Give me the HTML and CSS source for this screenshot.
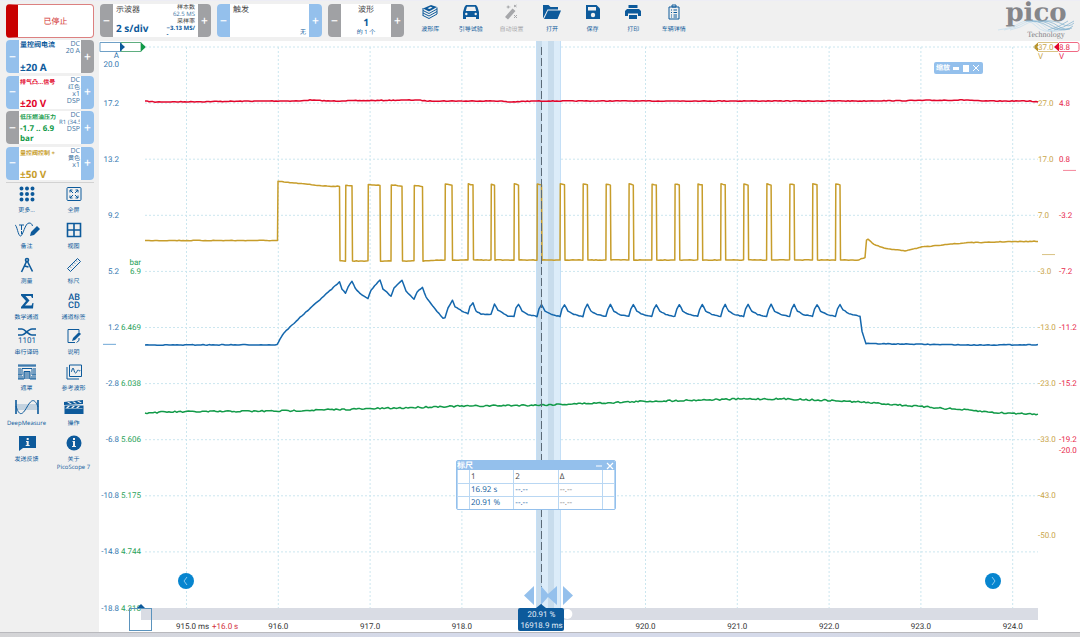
FILE: index.html
```html
<!DOCTYPE html>
<html lang="zh-CN">
<head>
    <meta charset="UTF-8">
    <meta name="viewport" content="width=device-width, initial-scale=1.0">
    <title>PicoScope 7</title>
    <link rel="stylesheet" href="styles.css">
</head>
<body>
    <header class="topbar">
        <button class="stop-btn" type="button">已停止</button>
        <section class="panel scope">
            <button class="step grey" type="button">−</button>
            <div class="panel-body split">
                <div class="main-col">
                    <span class="panel-title">示波器</span>
                    <strong class="value">2 s/div</strong>
                </div>
                <div class="info-col">
                    <span class="dark">样本数</span>
                    <span>62.5 MS</span>
                    <span class="dark">采样率</span>
                    <b>−3.13 MS/</b>
                    <b class="wrapped">-</b>
                </div>
            </div>
            <button class="step grey" type="button">+</button>
        </section>
        <section class="panel trigger">
            <button class="step" type="button">−</button>
            <div class="panel-body">
                <span class="panel-title">触发</span>
                <span class="panel-note">无</span>
            </div>
            <button class="step" type="button">+</button>
        </section>
        <section class="panel waves">
            <button class="step grey" type="button">−</button>
            <div class="panel-body centered">
                <span class="panel-title">波形</span>
                <strong class="value">1</strong>
                <span class="panel-note">的 1 个</span>
            </div>
            <button class="step grey" type="button">+</button>
        </section>
        <nav class="toolbar">
            <button class="tool" type="button">
                <svg viewBox="0 0 16 16"><path d="M1 4.500l8-3.500 6 2-8 4.500z"/><path class="line" d="M1 6.500l6 3 8-4.500M1 9l6 3 8-4.500M1 11.500l6 3 8-4.500M1 4v8M15 3.500v6.500"/><path class="hole" d="M5.500 4.200l3-1.400 2 .7-3 1.500z"/></svg>
                波形库
            </button>
            <button class="tool" type="button">
                <svg viewBox="0 0 16 16"><path d="M3 1h10l1.500 2L16 8v7h-3v-2H3v2H0V8l1.500-5z"/><path class="hole" d="M4 2.800h8L13.200 7H2.800z"/><circle class="hole" cx="3.300" cy="10" r="1.200"/><circle class="hole" cx="12.700" cy="10" r="1.200"/></svg>
                引导试验
            </button>
            <button class="tool off" type="button" disabled>
                <svg viewBox="0 0 16 16"><path d="M2 13l7.500-8.500 3 2.500L5 15.500zM5 1l1 1.500L8 3 6 3.500 5 5l-.5-1.500L3 3l1.500-.5z"/><path class="line" d="M11 3l2.500-2M11 1l2.500 2M11 11l3 3M14 11l-3 3"/></svg>
                自动设置
            </button>
            <button class="tool" type="button">
                <svg class="folder" viewBox="0 0 18 16"><path d="M0 14.500V1h5.500l2 2H15v2.500H4.500z"/><path d="M5 6.500h13L14.500 15H1z"/></svg>
                打开
            </button>
            <button class="tool" type="button">
                <svg viewBox="0 0 16 16"><path d="M1 1h10.500L15 4.500V15H1z"/><path class="hole" d="M3 3h8v3.500H3z"/><circle class="hole" cx="8" cy="11" r="2.200"/></svg>
                保存
            </button>
            <button class="tool" type="button">
                <svg viewBox="0 0 16 16"><path d="M3.500 1h9v3h-9zM2 5h12l2 2v5h-3V9.500H3V12H0V7z"/><path d="M4 11h8v4H4z"/></svg>
                打印
            </button>
            <button class="tool" type="button">
                <svg viewBox="0 0 16 16"><path class="line" d="M3 3h10v12H3zM6 3V1h4v2zM5 6h1M7.500 6H11M5 8.500h1M7.500 8.500H11M5 11h1M7.500 11H11M5 13h1M7.500 13H11"/></svg>
                车辆详情
            </button>
        </nav>
        <div class="logo">
            <span class="logo-name">pico</span>
            <svg class="logo-wave" viewBox="0 0 76 11">
                <path d="M0 10Q14 8 22 3T38 6 56 10M6 10Q18 8 26 3T42 6 60 10M12 10Q22 8 30 3T46 6 64 10" stroke="#c3dcec"/>
                <path d="M28 1Q40 0 50 6T72 9M34 1Q46 0 55 6T74 8M40 1Q52 0 60 6T75 6M46 1Q57 0 64 4T76 3M56 10Q66 8 76 1M50 10Q60 8 70 1" stroke="#7fb0cf"/>
            </svg>
            <span class="logo-sub">Technology</span>
        </div>
    </header>

    <div class="workspace">
        <aside class="sidebar">
            <div class="channels">
                <article class="channel blue">
                    <button class="step" type="button">−</button>
                    <div class="channel-body">
                        <div class="main-col"><span class="name large">量控阀电流</span><strong>±20 A</strong></div>
                        <div class="info-col"><span>DC</span><span>20 A</span></div>
                    </div>
                    <button class="step grey" type="button">+</button>
                </article>
                <article class="channel red">
                    <button class="step" type="button">−</button>
                    <div class="channel-body">
                        <div class="main-col"><span class="name">排气凸...信号</span><strong>±20 V</strong></div>
                        <div class="info-col"><span>DC</span><span class="cjk">红色</span><span>x1</span><span>DSP</span></div>
                    </div>
                    <button class="step" type="button">+</button>
                </article>
                <article class="channel green">
                    <button class="step grey" type="button">−</button>
                    <div class="channel-body">
                        <div class="main-col"><span class="name">低压燃油压力</span><strong class="range">-1.7 .. 6.9<br>bar</strong></div>
                        <div class="info-col"><span>DC</span><span class="cut">R1 (34.5</span><span>DSP</span></div>
                    </div>
                    <button class="step" type="button">+</button>
                </article>
                <article class="channel gold">
                    <button class="step" type="button">−</button>
                    <div class="channel-body">
                        <div class="main-col"><span class="name">量控阀控制 +</span><strong>±50 V</strong></div>
                        <div class="info-col"><span>DC</span><span class="cjk">黄色</span><span>x1</span></div>
                    </div>
                    <button class="step" type="button">+</button>
                </article>
            </div>
            <nav class="tools">
                <button class="tool" type="button">
                    <svg viewBox="0 0 16 16"><path class="dots" d="M2.500 2.500h0M8 2.500h0M13.500 2.500h0M2.500 8h0M8 8h0M13.500 8h0M2.500 13.500h0M8 13.500h0M13.500 13.500h0"/></svg>
                    更多...
                </button>
                <button class="tool" type="button">
                    <svg viewBox="0 0 16 16"><rect class="line" x="1" y="1.500" width="14" height="13" rx="1"/><path class="line" d="M4 6.500V4h2.500M9.500 4H12v2.500M12 9.500V12H9.500M6.500 12H4V9.500M4 4l3 3M12 4L9 7M4 12l3-3M12 12L9 9"/></svg>
                    全屏
                </button>
                <button class="tool" type="button">
                    <svg class="wide" viewBox="0 0 26 16"><path class="line" d="M1 3c2 0 3 11 5.500 11S11 1 15 1c2 0 3 1 3.500 3M5 3h5M7.500 3v5M7.500 9v3"/><path d="M16 14l1-4 6-6 3 3-6 6z"/></svg>
                    备注
                </button>
                <button class="tool" type="button">
                    <svg viewBox="0 0 16 16"><path class="line bold" d="M1.500 1.500h13v13h-13zM8 1.500v13M1.500 8h13"/></svg>
                    视图
                </button>
                <button class="tool" type="button">
                    <svg viewBox="0 0 16 16"><path class="line bold" d="M7.500 4.500L2.500 15M8.500 4.500l5 10M5.500 9l4 1"/><circle class="line bold" cx="8" cy="3" r="1.500"/></svg>
                    测量
                </button>
                <button class="tool" type="button">
                    <svg viewBox="0 0 16 16"><path class="line" d="M1.500 11.500l10-10 3 3-10 10zM4 9.500l1 1M6 7.500l1 1M8 5.500l1 1M10 3.500l1 1"/></svg>
                    标尺
                </button>
                <button class="tool" type="button">
                    <svg viewBox="0 0 16 16"><path d="M2 1h12v4h-1l-1-2H6.500l4 4.500L6 12.500h6.500l1-2.500h1L14 15.500H2V14l5-6-5-5.500z"/></svg>
                    数学通道
                </button>
                <button class="tool" type="button">
                    <svg viewBox="0 0 16 16"><text x="8" y="7" class="icon-text">AB</text><text x="8" y="15" class="icon-text">CD</text></svg>
                    通道标签
                </button>
                <button class="tool" type="button">
                    <svg class="wide" viewBox="0 0 26 16"><path class="line bold" d="M4 1h4c3 0 6 6 10 6h4M4 7h4c3 0 6-6 10-6h4"/><text x="13" y="15" class="icon-text plain">1101</text></svg>
                    串行译码
                </button>
                <button class="tool" type="button">
                    <svg viewBox="0 0 16 16"><path class="line" d="M13 4V1.500H2v13h7M13 10v2.500l-2.500 2"/><path d="M6 13l1-3 6-6 2 2-6 6z"/></svg>
                    说明
                </button>
                <button class="tool" type="button">
                    <svg class="wide" viewBox="0 0 26 16"><path d="M4 1h18v2H4zM4 4h3v7H4zM19 4h3v7h-3zM10 8h6v7h-6zM4 12h5v3H4zM17 12h5v3h-5z" opacity=".55"/><path class="line" d="M4 1h18M4 11h4V4.500h10V11h4M4 15h6V7.500h6V15h6"/></svg>
                    遮罩
                </button>
                <button class="tool" type="button">
                    <svg viewBox="0 0 16 16"><path class="line" d="M3.500 1h12v11.500h-12zM1 3v12h12M5 8c1 0 1-4 2-4s1 5 2.500 5S11 6 12 6s1 2 2.500 0"/></svg>
                    参考波形
                </button>
                <button class="tool" type="button">
                    <svg class="wide" viewBox="0 0 26 16"><path d="M2 5h22v6H2z" opacity=".2"/><path class="line bold" d="M2 1v14M24 1v14"/><path class="line" d="M2 7c3 10 6 10 11 1s8-8 11 0"/></svg>
                    DeepMeasure
                </button>
                <button class="tool" type="button">
                    <svg class="wide" viewBox="0 0 26 16"><path d="M3.500 6.500h19V15h-19zM3 3l19-2v4L3 6z"/><path class="hole" d="M6 3l3 2h2L8 3zM11 2.500l3 2h2l-3-2zM16 2l3 2h2l-3-2zM7 7L5 9h2l2-2zM12 7l-2 2h2l2-2zM17 7l-2 2h2l2-2zM4.500 9.500h17v.6h-17z"/></svg>
                    操作
                </button>
                <button class="tool" type="button">
                    <svg class="wide" viewBox="0 0 26 16"><path d="M5 1h17v12H9l-4 3z"/><path class="hole" d="M12.700 3h2v2h-2zM12 6h2.700v4h1v1h-4v-1h1V7H12z"/></svg>
                    发送反馈
                </button>
                <button class="tool" type="button">
                    <svg viewBox="0 0 16 16"><circle cx="8" cy="8" r="7.500"/><path class="hole" d="M7 3h2v2H7zM6.500 6H9v5h1v1H6v-1h1V7h-.5z"/></svg>
                    <span>关于<br>PicoScope 7</span>
                </button>
            </nav>
        </aside>

        <main class="graph">
            <svg class="axis" id="left-axis"></svg>
            <div class="plot">
                <svg class="grid" id="grid"></svg>
                <svg class="traces" viewBox="145 47 893 561" preserveAspectRatio="none">
                    <g class="zoom-band">
                        <rect x="537" y="41" width="24" height="567" fill="#dcecf9"/>
                        <rect x="537" y="41" width="5" height="567" fill="#c8dcec"/>
                        <rect x="548" y="41" width="6" height="567" fill="#c8dcec"/>
                        <path d="M536.500 41v567M560.500 41v567" stroke="#c4dff6"/>
                    </g>
                    <g id="traces"></g>
                    <path class="ruler" d="M541.500 47v561"/>
                    <path class="handles" d="M534 586v19l-10-9.500zM541 586l7 8 9-8v19l-9-8-7 8zM563 586v19l10-9.500z"/>
                </svg>
                <div class="ruler-flag"><span>20.91 %</span><span>16918.9 ms</span></div>
                <button class="pan prev" type="button" aria-label="上一页"><svg viewBox="0 0 16 16"><path d="M9 4L6 8l3 4"/></svg></button>
                <button class="pan next" type="button" aria-label="下一页"><svg viewBox="0 0 16 16"><path d="M7 4l3 4-3 4"/></svg></button>
                <div class="zoom-pill">
                    缩放
                    <svg viewBox="0 0 30 9"><path d="M1 3h6v3H1zM11 1h6v7h-6z" fill="#fff"/><path d="M21 1l6 6M27 1l-6 6" stroke="#fff"/></svg>
                </div>
                <section class="rulers">
                    <header>标尺<svg viewBox="0 0 20 8"><path d="M1 4h6M12 1l6 6M18 1l-6 6"/></svg></header>
                    <table>
                        <tr><th></th><th>1</th><th>2</th><th>Δ</th><th></th></tr>
                        <tr><td></td><td>16.92 s</td><td>--.--</td><td class="delta">--.--</td><td></td></tr>
                        <tr><td></td><td>20.91 %</td><td>--.--</td><td class="delta">--.--</td><td></td></tr>
                    </table>
                </section>
            </div>
            <svg class="axis" id="right-axis"></svg>
            <div class="time-axis">
                <svg id="time-axis"></svg>
            </div>
        </main>
    </div>
    <footer class="desktop-edge"></footer>
    <script src="script.js"></script>
</body>
</html>
```
FILE: styles.css
```css
* {
    box-sizing: border-box;
}
body {
    margin: 0;
    min-height: 100vh;
    display: flex;
    flex-direction: column;
    background: #f0f0f0;
    color: #0d5a9b;
    font-family: "Open Sans", "Noto Sans CJK SC", sans-serif;
    font-size: 7px;
    line-height: 8px;
    text-rendering: geometricPrecision;
}
button {
    margin: 0;
    padding: 0;
    border: none;
    background: none;
    color: inherit;
    font: inherit;
    text-rendering: inherit;
}
svg {
    display: block;
    overflow: visible;
}

/* top bar */
.topbar {
    display: flex;
    height: 40px;
    padding: 3px 6px 2px;
    gap: 6px;
    border-top: 1px solid #ededf5;
}
.stop-btn {
    width: 88px;
    height: 34px;
    padding-top: 2px;
    border: 1px solid #dc8080;
    border-left: 12px solid #c80000;
    border-radius: 4px;
    background: #fff;
    color: #d23030;
    font-size: 8px;
}
.panel,
.channel {
    display: flex;
    background: #fff;
    border-radius: 4px;
    overflow: hidden;
    height: 33px;
}
.scope {
    width: 111px;
}
.trigger {
    width: 105px;
}
.waves {
    width: 76px;
}
.step {
    flex: 0 0 13px;
    background: #94c0ec;
    color: #fff;
    font-size: 12px;
    font-weight: 600;
    line-height: 12px;
}
.step.grey {
    background: #a0a1a4;
}
.panel-body {
    flex: 1;
    min-width: 0;
    display: flex;
    flex-direction: column;
    justify-content: space-between;
    padding: 0 3px;
}
.panel-body.split {
    flex-direction: row;
}
.panel-body.centered {
    align-items: center;
}
.panel-title {
    color: #444;
    font-size: 8px;
    line-height: 12px;
}
.value {
    font-size: 10px;
    line-height: 12px;
}
.scope .main-col {
    display: flex;
    flex-direction: column;
    gap: 6px;
    white-space: nowrap;
}
.panel-note {
    align-self: flex-end;
    font-size: 6px;
    line-height: 9px;
}
.centered .panel-note {
    align-self: center;
}
.info-col {
    display: flex;
    flex-direction: column;
    align-items: flex-end;
    font-size: 6px;
    line-height: 7px;
    color: #3a719f;
    white-space: nowrap;
}
.info-col b {
    color: #0d5a9b;
}
.info-col .dark {
    color: #444;
}
.info-col .wrapped {
    align-self: flex-start;
    line-height: 4px;
}
.toolbar {
    display: flex;
    width: 284px;
}
.tool {
    display: flex;
    flex-direction: column;
    align-items: center;
    color: #0d5a9b;
    fill: #0d5a9b;
    font-size: 6px;
    line-height: 8px;
    white-space: nowrap;
}
.toolbar .tool {
    flex: 1;
    gap: 5px;
}
.tool svg {
    width: 16px;
    height: 16px;
}
.tool svg.folder {
    width: 18px;
}
.tool svg.wide {
    width: 26px;
}
.tool.off {
    color: #a6a7aa;
    fill: #a6a7aa;
}
.line {
    fill: none;
    stroke: #0d5a9b;
    stroke-width: 1;
}
.off .line {
    stroke: #a6a7aa;
}
.bold {
    stroke-width: 1.6;
}
.dots {
    stroke: #0d5a9b;
    stroke-width: 4;
    stroke-linecap: round;
}
.hole {
    fill: #f0f0f0;
}
.icon-text {
    font-family: Roboto, sans-serif;
    font-size: 9px;
    font-weight: 500;
    text-anchor: middle;
}
.icon-text.plain {
    font-size: 8px;
    font-weight: normal;
}
.logo {
    width: 76px;
    margin-left: auto;
    display: flex;
    flex-direction: column;
    align-items: center;
    color: #85868a;
}
.logo-name {
    font-family: "DejaVu Serif", serif;
    font-size: 26px;
    font-weight: bold;
    line-height: 18px;
    height: 16px;
}
.logo-wave {
    width: 76px;
    height: 11px;
    fill: none;
    stroke-width: 0.7;
}
.logo-sub {
    padding-left: 20px;
    font-family: "Liberation Serif", serif;
    font-size: 8px;
}

/* sidebar */
.workspace {
    flex: 1;
    display: flex;
}
.sidebar {
    width: 99px;
    padding: 0 5px 0 6px;
    display: flex;
    flex-direction: column;
    gap: 2px;
}
.channels {
    display: flex;
    flex-direction: column;
    justify-content: space-between;
    height: 140px;
}
.channel-body {
    flex: 1;
    min-width: 0;
    display: flex;
    justify-content: space-between;
    position: relative;
    padding: 1px 1px 0;
}
.channel .main-col {
    display: flex;
    flex-direction: column;
    justify-content: space-between;
    white-space: nowrap;
    min-width: 0;
}
.channel strong {
    font-size: 10px;
    line-height: 12px;
}
.channel .range {
    font-size: 8px;
    line-height: 10px;
}
.name {
    font-size: 6px;
    line-height: 10px;
    font-weight: bold;
}
.name.large {
    font-size: 7px;
}
/* the coupling column may lie over a long range */
.channel .info-col {
    position: absolute;
    top: 1px;
    right: 1px;
    font-size: 7px;
}
.channel .info-col .cjk {
    font-size: 6px;
}
.channel .cut {
    width: 21px;
    font-size: 6px;
    overflow: hidden;
}
.blue {
    color: #0d5a9b;
}
.red {
    color: #e2062c;
}
.green {
    color: #119a48;
}
.gold {
    color: #c79d2b;
}
.tools {
    display: grid;
    grid-template-columns: 1fr 1fr;
    grid-auto-rows: 1fr;
    height: 289px;
    column-gap: 6px;
    padding-top: 3px;
    border-top: 1px solid #d2d2d2;
}
.tools .tool {
    gap: 4px;
    justify-content: flex-start;
}

/* graph */
.graph {
    flex: 1;
    display: grid;
    grid-template-columns: 46px 1fr 42px;
    grid-template-rows: 1fr 24px;
    margin-top: 1px;
    padding-top: 6px;
    background: #fff;
    font-family: Roboto, "Noto Sans CJK SC", sans-serif;
    font-size: 8px;
}
.axis {
    width: 100%;
    height: 100%;
}
.axis text,
.time-axis text {
    dominant-baseline: central;
}
.axis .blue {
    fill: #3478b0;
}
.axis .green {
    fill: #2aa25a;
}
.axis .gold {
    fill: #c9a548;
}
.axis .red {
    fill: #e8284c;
}
.plot {
    position: relative;
}
.grid,
.traces {
    position: absolute;
    inset: 0;
    width: 100%;
    height: 100%;
}
.grid line {
    stroke: #cbe6ef;
    stroke-dasharray: 2 2;
}
.trace {
    fill: none;
    stroke-width: 1.5;
    stroke-linejoin: round;
}
.ruler {
    stroke: #5c6b78;
    stroke-dasharray: 8 3;
}
.handles {
    fill: #94c0ec;
}
.ruler-flag {
    position: absolute;
    top: 100%;
    left: 44.4%;
    transform: translateX(-50%);
    z-index: 2;
    width: 46px;
    height: 23px;
    padding-top: 1px;
    border-radius: 2px;
    background: #0d5a9b;
    color: #e3eef8;
    display: flex;
    flex-direction: column;
    align-items: center;
    line-height: 11px;
    white-space: nowrap;
}
.ruler-flag::before {
    content: "";
    position: absolute;
    top: -4px;
    left: 18px;
    border: 5px solid transparent;
    border-top: none;
    border-bottom: 4px solid #0d5a9b;
}
.pan {
    position: absolute;
    bottom: 19px;
    width: 16px;
    height: 16px;
    border-radius: 50%;
    background: #0785cf;
}
.pan path {
    fill: none;
    stroke: #8ccbf0;
    stroke-width: 1;
}
.prev {
    left: 33px;
}
.next {
    right: 37px;
}
.zoom-pill {
    position: absolute;
    top: 15px;
    right: 55px;
    width: 49px;
    height: 12px;
    padding-left: 2px;
    display: flex;
    align-items: center;
    gap: 2px;
    border-radius: 2px;
    background: #94c0ec;
    color: #fff;
    font-size: 7px;
    font-weight: bold;
    white-space: nowrap;
}
.zoom-pill svg {
    width: 30px;
    height: 9px;
}
.rulers {
    position: absolute;
    top: 413px;
    left: 311px;
    width: 160px;
    border: 1px solid #94c0ec;
    border-radius: 2px;
    background: #fff;
    font-family: "Open Sans", "Noto Sans CJK SC", sans-serif;
    overflow: hidden;
}
.rulers header {
    display: flex;
    justify-content: space-between;
    align-items: center;
    height: 9px;
    background: #94c0ec;
    color: #fff;
    font-size: 8px;
    font-weight: bold;
    line-height: 9px;
}
.rulers header svg {
    width: 20px;
    height: 8px;
    stroke: #fff;
    stroke-width: 1.2;
}
.rulers table {
    width: 100%;
    table-layout: fixed;
    border-collapse: collapse;
    line-height: 11px;
}
.rulers th,
.rulers td {
    height: 13px;
    padding: 0 1px;
    border: 1px solid #b9d7f3;
    text-align: left;
    font-weight: normal;
}
.rulers tr:last-child td {
    border-bottom: none;
}
.rulers tr:first-child th {
    border-top: none;
}
.rulers th {
    color: #444;
}
.rulers th:first-child,
.rulers th:last-child {
    width: 12px;
}
.rulers .delta {
    color: #777;
}
.time-axis {
    grid-column: 2;
}
.time-axis svg {
    width: 100%;
    height: 24px;
}
.desktop-edge {
    height: 5px;
    border-top: 1px solid #b9b9bd;
    background: linear-gradient(90deg, #d4d4d6, #d5daea 40%, #d5daea 75%, #d4d4d6);
}
```
FILE: script.js
```javascript
const NS = 'http://www.w3.org/2000/svg';

function add(parent, tag, attrs, text) {
    const el = document.createElementNS(NS, tag);
    for (const key in attrs) el.setAttribute(key, attrs[key]);
    if (text !== undefined) el.textContent = text;
    parent.appendChild(el);
    return el;
}

// one label per grid line, null where the line has none
function labels(axis, values, x, anchor, cls) {
    values.forEach((v, i) => {
        if (v !== null) add(axis, 'text', { x, y: i * 10 + '%', 'text-anchor': anchor, class: cls }, v);
    });
}

const left = document.getElementById('left-axis');
const right = document.getElementById('right-axis');
labels(left, [null, '17.2', '13.2', '9.2', '5.2', '1.2', '-2.8', '-6.8', '-10.8', '-14.8', '-18.8'], 20, 'end', 'blue');
labels(left, [null, null, null, null, '6.9', '6.469', '6.038', '5.606', '5.175', '4.744', '4.318'], 42, 'end', 'green');
labels(right, ['37.0', '27.0', '17.0', '7.0', '-3.0', '-13.0', '-23.0', '-33.0', '-43.0'], 0, 'start', 'gold');
labels(right, ['8.8', '4.8', '0.8', '-3.2', '-7.2', '-11.2', '-15.2', '-19.2'], 21, 'start', 'red');
add(left, 'text', { x: 20, y: 8, 'text-anchor': 'end', class: 'blue' }, 'A');
add(left, 'text', { x: 20, y: 17, 'text-anchor': 'end', class: 'blue' }, '20.0');
add(left, 'text', { x: 42, y: '38.5%', 'text-anchor': 'end', class: 'green' }, 'bar');
add(right, 'text', { x: 0, y: 9, class: 'gold' }, 'V');
add(right, 'text', { x: 21, y: 9, class: 'red' }, 'V');
add(right, 'text', { x: 21, y: '72%', class: 'red' }, '-20.0');
add(right, 'text', { x: 0, y: '87%', class: 'gold' }, '-50.0');

// channel handles and zero marks
add(left, 'path', { d: 'M1 -4.500h21v9H1z', fill: 'none', stroke: '#6fa0c6' });
add(left, 'path', { d: 'M22 -4.500h20v9H22z', fill: 'none', stroke: '#5fae80' });
add(left, 'path', { d: 'M21 -4.500l5 4.500-5 4.500z', fill: '#0d5a9b' });
add(left, 'path', { d: 'M42 -4.500l5 4.500-5 4.500z', fill: '#119a48' });
add(left, 'line', { x1: 4, x2: 17, y1: '53%', y2: '53%', stroke: '#6fa8d6' });
add(right, 'path', { d: 'M0 -4.500h20M0 4.500h20', stroke: '#d9c384' });
add(right, 'path', { d: 'M0 -4.500l-5 4.500 5 4.500z', fill: '#b9932b' });
add(right, 'path', { d: 'M21 -4.500h18q2 0 2 2v5q0 2-2 2H21', fill: 'none', stroke: '#f06a84' });
add(right, 'path', { d: 'M21 -4.500l-5 4.500 5 4.500z', fill: '#e2062c' });
add(right, 'line', { x1: 25, x2: 38, y1: '22%', y2: '22%', stroke: '#f4879c' });
add(right, 'line', { x1: 4, x2: 17, y1: '37%', y2: '37%', stroke: '#d9c384' });

// grid and time scale: 915 s is the first vertical line
const grid = document.getElementById('grid');
const time = document.getElementById('time-axis');
const timeX = t => (41.5 + (t - 915) * 91.8) / 893 * 100 + '%';
for (let i = 0; i < 10; i++) {
    add(grid, 'line', { x1: 0, x2: '100%', y1: i * 10 + '%', y2: i * 10 + '%' });
}
add(time, 'rect', { x: -4, y: 0, width: '100%', height: 12, fill: '#d9dce4' });
add(time, 'rect', { x: '99%', y: 0, width: '1%', height: 12, fill: '#d9dce4' });
for (let t = 915; t <= 924; t++) {
    const x = timeX(t);
    add(grid, 'line', { x1: x, x2: x, y1: 0, y2: '100%' });
    if (t > 915 && t !== 919) {
        add(time, 'text', { x, y: 18, 'text-anchor': 'middle', fill: '#333' }, t + '.0');
    }
}
add(time, 'text', { x: 31, y: 18, fill: '#333' }, '915.0 ms');
add(time, 'text', { x: 67, y: 18, fill: '#d22f3a' }, '+16.0 s');
add(time, 'rect', { x: -15.5, y: 0.5, width: 22, height: 22, fill: 'none', stroke: '#5b93bd' });
add(time, 'path', { d: 'M-8 0l4-4 4 4z', fill: '#0d5a9b' });
add(time, 'circle', { cx: '47.3%', cy: 6, r: 5, fill: '#fff' });

// traces
let seed = 7;
function rand() {
    seed = (seed * 16807) % 2147483647;
    return seed / 2147483647 - 0.5;
}

function draw(points, color, noise) {
    let d = 'M' + points[0];
    for (let i = 1; i < points.length; i++) {
        const [x0, y0] = points[i - 1];
        const [x1, y1] = points[i];
        const steps = Math.max(1, Math.round((x1 - x0) / 2));
        for (let s = 1; s <= steps; s++) {
            const k = s / steps;
            const x = x0 + (x1 - x0) * k;
            const y = y0 + (y1 - y0) * k + rand() * noise;
            d += 'L' + x.toFixed(1) + ' ' + y.toFixed(1);
        }
    }
    add(document.getElementById('traces'), 'path', { d, stroke: color, class: 'trace' });
}

draw([[145, 101], [155, 102], [270, 101], [300, 101], [310, 100], [330, 101], [415, 100], [430, 101],
    [500, 101], [508, 102], [535, 101], [600, 101], [680, 101], [740, 101], [860, 101], [968, 100],
    [980, 101], [1030, 101], [1038, 102]], '#e2062c', 0.7);

const gold = [[145, 240.5], [277.5, 240.5], [278, 181.5], [300, 183.5], [325, 186], [339.5, 186.3]];
const pulses = [[345.5, 352, 185], [368, 380, 184.5], [391, 402, 185], [414, 422.5, 185.5],
    [445, 452, 184], [468, 473, 184], [491, 494.5, 184], [514, 518.5, 184]];
for (let i = 0; i < 14; i++) pulses.push([537 + i * 22.96, 541.5 + i * 22.96, 184]);
let low = 261;
gold.push([340, low]);
for (const [on, off, top] of pulses) {
    gold.push([on, low], [on + 0.3, top], [off, top + 1], [off + 0.5, low]);
    if (off > 420) low = 260;
}
gold.push([859, 260], [862, 258.5], [865, 257.5], [866.5, 240], [868, 239], [874, 244.5], [882, 247.5],
    [890, 249.3], [905, 250.7], [915, 248.5], [922, 247], [937, 245.7], [945, 244.3], [960, 243.6],
    [968, 242.4], [985, 242.6], [1000, 241.8], [1038, 241.3]);
draw(gold, '#c79d2b', 0.6);

const blue = [[145, 345], [277, 344.8], [280, 339], [284, 333], [290, 327], [300, 317.5], [320, 299.5],
    [339.5, 282], [342, 289], [345.5, 293.5], [348, 287], [352, 281], [355, 288], [360, 293.5], [368, 298.5],
    [371, 290], [380, 280], [383, 289], [391, 296], [394, 288], [402, 280], [406, 291], [414, 299],
    [417, 292], [422.5, 287.5], [426, 297], [435, 309], [443, 318.5], [445, 318], [448, 308], [452.5, 300],
    [455, 307], [462, 311], [468, 313.5], [470, 306], [473, 303], [476, 311], [481, 314], [491, 314.5],
    [494.5, 304], [498, 310], [508, 316], [514, 316.5], [516, 308], [518.5, 304.5]];
for (let i = 0; i < 14; i++) {
    const x = 537 + i * 22.96;
    blue.push([x - 15, 311], [x - 9, 314.5], [x, 316.5], [x + 2, 309], [x + 4.5, 304.5]);
}
blue.push([843, 310], [849, 313.5], [860, 316.5], [862, 331], [866, 343.5], [970, 345], [1038, 344.7]);
draw(blue, '#1467ad', 0.7);

draw([[145, 413], [165, 412], [220, 411.5], [280, 411], [340, 409.5], [400, 408], [440, 406.5], [541, 405],
    [600, 403], [640, 401.5], [700, 400], [740, 399], [790, 399], [830, 400.5], [860, 402], [920, 406.5],
    [960, 409.5], [1000, 413], [1038, 414]], '#119a48', 1.6);
```
